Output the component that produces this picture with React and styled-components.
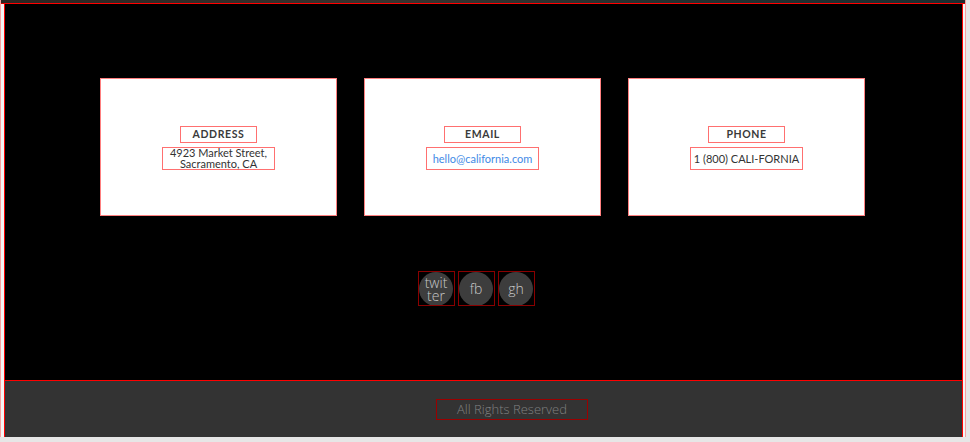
import React from "react";
import styled, { createGlobalStyle } from "styled-components";

const GlobalStyle = createGlobalStyle`
    html, body {
        margin: 0;
        padding: 0;
        background: #e6e6e6;
    }
    * {
        box-sizing: border-box;
    }
`;

const Page = styled.div`
    margin-left: 1px;
    width: 964px;
    outline: 1px solid #f8a0a0;
    background: #f4f4f4;
    padding: 0 3px 0 4px;
`;

const Hero = styled.div`
    height: 3px;
    margin: 0 -3px 0 -4px;
    background: linear-gradient(90deg, #2b2622 0%, #3a332e 40%, #25302f 70%, #1c2e30 100%);
    outline: 1px solid #d00000;
`;

const Contact = styled.section`
    margin-top: 1px;
    height: 376px;
    background: #000;
    outline: 1px solid #ff0000;
    display: flex;
    flex-direction: column;
    align-items: center;
    padding-top: 75px;
`;

const Cards = styled.div`
    display: flex;
    gap: 29px;
    margin-right: 2px;
`;

const Card = styled.div`
    width: 235px;
    height: 136px;
    padding-top: 1px;
    background: #fff;
    outline: 1px solid #ff8080;
    display: flex;
    flex-direction: column;
    align-items: center;
    justify-content: center;
    gap: 4px;
    font-family: "Lato", "Open Sans", sans-serif;
`;

const Title = styled.h3`
    margin: 0;
    width: 77px;
    height: 17px;
    border: 1px solid #ff7070;
    display: flex;
    align-items: center;
    justify-content: center;
    font-size: 10.5px;
    font-weight: 700;
    letter-spacing: 0.6px;
    color: #3a3a3a;
`;

const Value = styled.a`
    width: 113px;
    height: 23px;
    border: 1px solid #ff7070;
    display: flex;
    align-items: center;
    justify-content: center;
    text-align: center;
    font-size: 11px;
    line-height: 11px;
    text-decoration: none;
    color: ${props => (props.$link ? "#3f8ae6" : "#333")};
`;

const Social = styled.ul`
    list-style: none;
    margin: 57px 0 0;
    padding: 0 15px 0 0;
    display: flex;
    gap: 5px;
`;

const SocialItem = styled.li`
    width: 35px;
    height: 33px;
    outline: 1px solid #8a0000;
    display: flex;
    align-items: center;
    justify-content: center;
`;

const Bubble = styled.a`
    flex: none;
    width: 34px;
    height: 34px;
    border-radius: 50%;
    background: #3d3d3d;
    color: #c8c8c8;
    font-family: "Open Sans", sans-serif;
    font-weight: 300;
    font-size: 14px;
    line-height: 13px;
    text-align: center;
    display: flex;
    align-items: center;
    justify-content: center;
    text-decoration: none;
    word-break: break-all;
    padding: 0 2px;
`;

const Footer = styled.footer`
    margin-top: 1px;
    height: 56px;
    background: #333;
    outline: 1px solid #ff0000;
    display: flex;
    align-items: center;
    justify-content: center;
    padding-left: 57px;
`;

const Copy = styled.p`
    margin: 0;
    width: 150px;
    height: 19px;
    outline: 1px solid #9a0000;
    display: flex;
    align-items: center;
    justify-content: center;
    font-family: "Open Sans", sans-serif;
    font-weight: 300;
    font-size: 13px;
    color: #808080;
`;

const cards = [
    { title: "ADDRESS", value: "4923 Market Street, Sacramento, CA" },
    { title: "EMAIL", value: "hello@california.com", link: true },
    { title: "PHONE", value: "1 (800) CALI-FORNIA" },
];

const App = () => {
    return (
        <>
            <GlobalStyle />
            <Page>
                <Hero />
                <Contact>
                    <Cards>
                        {cards.map(c => (
                            <Card key={c.title}>
                                <Title>{c.title}</Title>
                                <Value $link={c.link} href={c.link ? "#" : undefined}>{c.value}</Value>
                            </Card>
                        ))}
                    </Cards>
                    <Social>
                        <SocialItem><Bubble href="#">twit ter</Bubble></SocialItem>
                        <SocialItem><Bubble href="#">fb</Bubble></SocialItem>
                        <SocialItem><Bubble href="#">gh</Bubble></SocialItem>
                    </Social>
                </Contact>
                <Footer>
                    <Copy>All Rights Reserved</Copy>
                </Footer>
            </Page>
        </>
    );
};

export default App;
